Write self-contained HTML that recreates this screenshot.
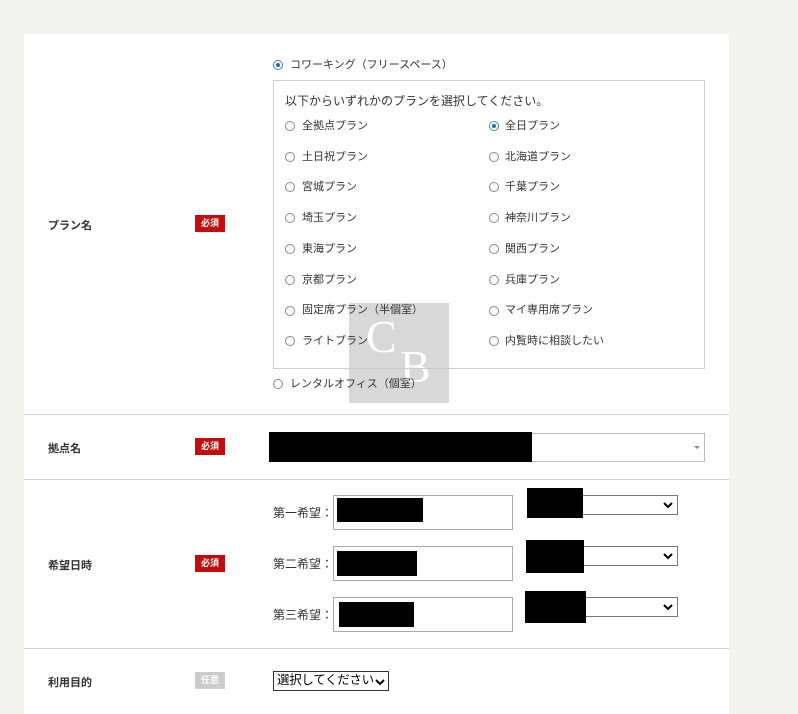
<!DOCTYPE html>
<html><head><meta charset="utf-8"><style>
*{margin:0;padding:0;box-sizing:border-box}
body{width:798px;height:706px;background:#f2f2f1;position:relative;overflow:hidden;font-family:"Liberation Sans","Noto Sans CJK JP",sans-serif;color:#333}
.a{position:absolute;white-space:nowrap}
.panel{position:absolute;left:24px;top:34px;width:705px;height:680px;background:#fff}
.hr{position:absolute;left:24px;width:705px;height:1px;background:#cfcfcf}
.lbl{font-size:11px;font-weight:bold;color:#333}
.req{width:30px;height:17px;background:#c30d0d;color:#fff;font-size:9px;font-weight:bold;text-align:center;line-height:17px}
.r{width:10px;height:10px;border:1px solid #888;border-radius:50%;background:#fff}
.r.on{border-color:#3b82c4}
.r.on::after{content:"";position:absolute;left:2px;top:2px;width:4px;height:4px;border-radius:50%;background:#1c6db5}
.t{font-size:11px;color:#333}
.box{border:1px solid #aaa;background:#fff}
.blk{background:#000}
.sel{border:1px solid #777;background:#fff}
.chev{position:absolute;right:4px;top:5px}
</style></head><body>
<div class="panel"></div>
<div class="hr" style="top:414px"></div>
<div class="hr" style="top:479px"></div>
<div class="hr" style="top:648px"></div>

<div class="a" style="left:349px;top:303px;width:100px;height:100px;background:rgba(200,200,200,0.7)"></div>
<div class="a" style="left:366px;top:310px;font-family:'Liberation Serif',serif;font-size:46px;color:#fff">C</div>
<div class="a" style="left:400px;top:340px;font-family:'Liberation Serif',serif;font-size:46px;color:#fff">B</div>

<div class="a lbl" style="left:48px;top:217px">プラン名</div>
<div class="a req" style="left:195px;top:215px">必須</div>
<div class="a r on" style="left:273px;top:60px"></div>
<div class="a t" style="left:290px;top:56px">コワーキング（フリースペース）</div>
<div class="a" style="left:273px;top:80px;width:432px;height:289px;border:1px solid #ccc"></div>
<div class="a" style="left:285px;top:92px;font-size:12px;color:#333">以下からいずれかのプランを選択してください。</div>

<div class="a r" style="left:285px;top:121px"></div><div class="a t" style="left:302px;top:117px">全拠点プラン</div>
<div class="a r on" style="left:489px;top:121px"></div><div class="a t" style="left:505px;top:117px">全日プラン</div>
<div class="a r" style="left:285px;top:152px"></div><div class="a t" style="left:302px;top:148px">土日祝プラン</div>
<div class="a r" style="left:489px;top:152px"></div><div class="a t" style="left:505px;top:148px">北海道プラン</div>
<div class="a r" style="left:285px;top:182px"></div><div class="a t" style="left:302px;top:178px">宮城プラン</div>
<div class="a r" style="left:489px;top:182px"></div><div class="a t" style="left:505px;top:178px">千葉プラン</div>
<div class="a r" style="left:285px;top:213px"></div><div class="a t" style="left:302px;top:209px">埼玉プラン</div>
<div class="a r" style="left:489px;top:213px"></div><div class="a t" style="left:505px;top:209px">神奈川プラン</div>
<div class="a r" style="left:285px;top:244px"></div><div class="a t" style="left:302px;top:240px">東海プラン</div>
<div class="a r" style="left:489px;top:244px"></div><div class="a t" style="left:505px;top:240px">関西プラン</div>
<div class="a r" style="left:285px;top:275px"></div><div class="a t" style="left:302px;top:271px">京都プラン</div>
<div class="a r" style="left:489px;top:275px"></div><div class="a t" style="left:505px;top:271px">兵庫プラン</div>
<div class="a r" style="left:285px;top:306px"></div><div class="a t" style="left:302px;top:301px">固定席プラン（半個室）</div>
<div class="a r" style="left:489px;top:306px"></div><div class="a t" style="left:505px;top:301px">マイ専用席プラン</div>
<div class="a r" style="left:285px;top:336px"></div><div class="a t" style="left:302px;top:332px">ライトプラン</div>
<div class="a r" style="left:489px;top:336px"></div><div class="a t" style="left:505px;top:332px">内覧時に相談したい</div>
<div class="a r" style="left:273px;top:379px"></div><div class="a t" style="left:290px;top:375px">レンタルオフィス（個室）</div>

<div class="a lbl" style="left:48px;top:440px">拠点名</div>
<div class="a req" style="left:195px;top:438px">必須</div>
<div class="a box" style="left:269px;top:433px;width:436px;height:29px;border-color:#bbb"></div>
<div class="a blk" style="left:269px;top:432px;width:263px;height:30px"></div>
<div class="a" style="left:694px;top:446px;width:0;height:0;border-left:3px solid transparent;border-right:3px solid transparent;border-top:3px solid #888"></div>

<div class="a lbl" style="left:48px;top:557px">希望日時</div>
<div class="a req" style="left:195px;top:555px">必須</div>

<div class="a t" style="left:273px;top:504px;font-size:12px">第一希望：</div>
<div class="a box" style="left:333px;top:495px;width:180px;height:35px"></div>
<div class="a blk" style="left:337px;top:498px;width:86px;height:24px"></div>
<div class="a sel" style="left:527px;top:495px;width:151px;height:20px"><svg class="chev" width="10" height="8"><path d="M1 2 L5 6 L9 2" stroke="#000" stroke-width="2" fill="none"/></svg></div>
<div class="a blk" style="left:527px;top:488px;width:56px;height:30px"></div>

<div class="a t" style="left:273px;top:555px;font-size:12px">第二希望：</div>
<div class="a box" style="left:333px;top:546px;width:180px;height:35px"></div>
<div class="a blk" style="left:337px;top:551px;width:80px;height:25px"></div>
<div class="a sel" style="left:527px;top:546px;width:151px;height:20px"><svg class="chev" width="10" height="8"><path d="M1 2 L5 6 L9 2" stroke="#000" stroke-width="2" fill="none"/></svg></div>
<div class="a blk" style="left:526px;top:540px;width:58px;height:33px"></div>

<div class="a t" style="left:273px;top:606px;font-size:12px">第三希望：</div>
<div class="a box" style="left:333px;top:597px;width:180px;height:35px"></div>
<div class="a blk" style="left:339px;top:602px;width:75px;height:25px"></div>
<div class="a sel" style="left:527px;top:597px;width:151px;height:20px"><svg class="chev" width="10" height="8"><path d="M1 2 L5 6 L9 2" stroke="#000" stroke-width="2" fill="none"/></svg></div>
<div class="a blk" style="left:525px;top:591px;width:61px;height:32px"></div>

<div class="a lbl" style="left:48px;top:674px">利用目的</div>
<div class="a req" style="left:195px;top:672px;background:#ccc">任意</div>
<div class="a" style="left:273px;top:671px;width:116px;height:20px;border:1px solid #333;font-size:12.5px;letter-spacing:-0.3px;line-height:17px;padding-left:3px;color:#000">選択してください<svg style="position:absolute;right:3px;top:6px" width="10" height="8"><path d="M1 2 L5 6 L9 2" stroke="#000" stroke-width="2" fill="none"/></svg></div>
</body></html>
